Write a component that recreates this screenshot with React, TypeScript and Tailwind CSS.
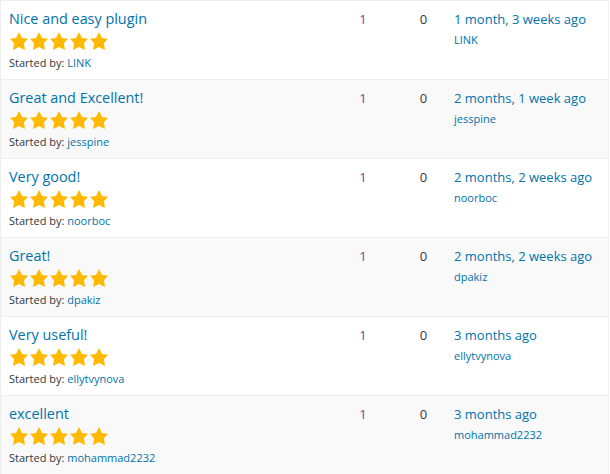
const topics = [
  { title: 'Nice and easy plugin', author: 'LINK', fresh: '1 month, 3 weeks ago' },
  { title: 'Great and Excellent!', author: 'jesspine', fresh: '2 months, 1 week ago' },
  { title: 'Very good!', author: 'noorboc', fresh: '2 months, 2 weeks ago' },
  { title: 'Great!', author: 'dpakiz', fresh: '2 months, 2 weeks ago' },
  { title: 'Very useful!', author: 'ellytvynova', fresh: '3 months ago' },
  { title: 'excellent', author: 'mohammad2232', fresh: '3 months ago' },
]

function Star() {
  return (
    <svg width="20" height="20" viewBox="0 0 20 20" className="block">
      <path d="M10 1l3 6 6 .75-4.12 4.62L16 19l-6-3-6 3 1.13-6.63L1 7.75 7 7z" fill="#ffb900" />
    </svg>
  )
}

export default function App() {
  return (
    <div className="w-[610px] h-[474px] overflow-hidden bg-white" style={{ fontFamily: '"Open Sans", sans-serif' }}>
      <div className="w-[609px] border border-[#eeeeee] border-b-0">
        {topics.map((t, i) => (
          <div
            key={i}
            className={`flex h-[79px] border-b border-[#eeeeee] ${i % 2 === 1 ? 'bg-[#f9f9f9]' : 'bg-white'}`}
          >
            {/* Topic */}
            <div className="w-[339px] pl-[8px] pt-[7px]">
              <div className="text-[14.4px] leading-[22px] text-[#0073aa]">{t.title}</div>
              <div className="flex mt-[1px]">
                <Star /><Star /><Star /><Star /><Star />
              </div>
              <div className="text-[11px] leading-[16px] mt-[4px] text-[#32373c]">
                Started by: <span className="text-[#0073aa]">{t.author}</span>
              </div>
            </div>
            {/* Voices */}
            <div className="w-[46px] pt-[9px] text-center text-[13px] leading-[18px] text-[#7d3c98]">1</div>
            {/* Replies */}
            <div className="w-[68px] pl-[7px] pt-[9px] text-center text-[13px] leading-[18px] text-[#32373c]">0</div>
            {/* Freshness */}
            <div className="flex-1 pt-[8px]">
              <div className="text-[13px] leading-[20px] text-[#0073aa]">{t.fresh}</div>
              <div className="text-[11px] leading-[16px] mt-[3px] text-[#0073aa]">{t.author}</div>
            </div>
          </div>
        ))}
      </div>
    </div>
  )
}
